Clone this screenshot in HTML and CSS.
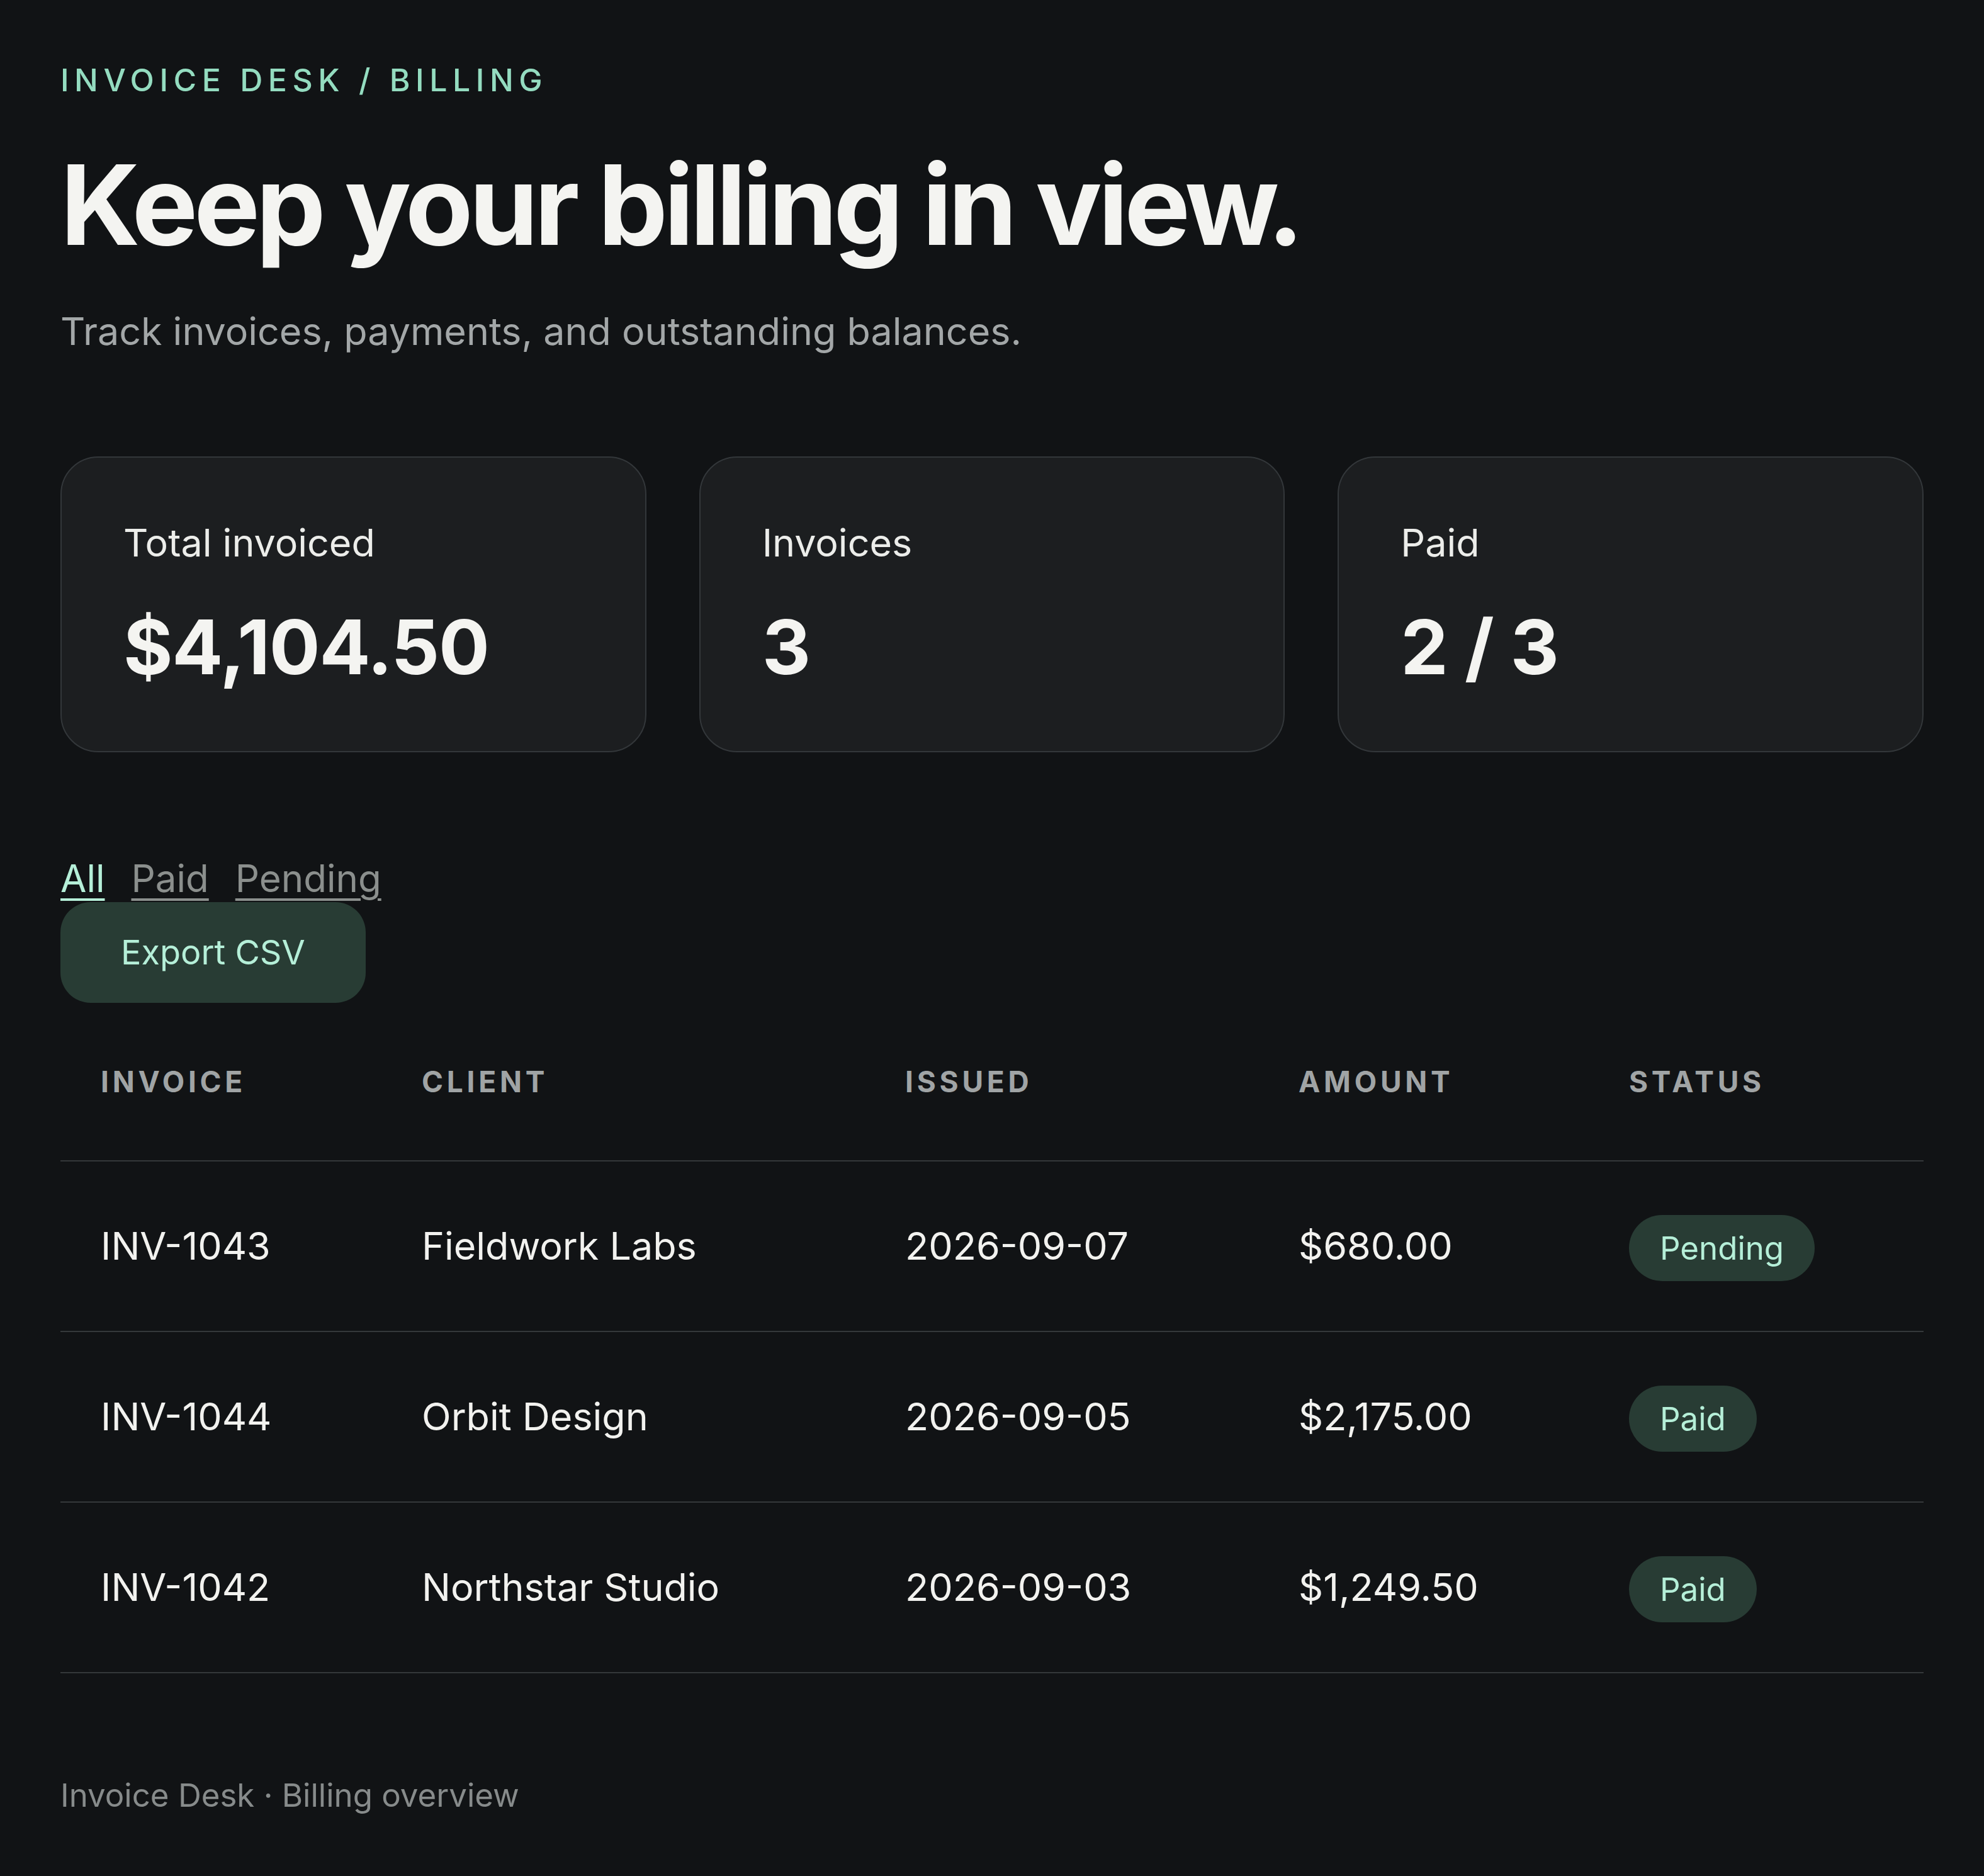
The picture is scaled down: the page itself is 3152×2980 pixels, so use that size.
FILE: index.html
```html
<!DOCTYPE html>
<html lang="en">
<head>
<meta charset="utf-8">
<title>Invoice Desk / Billing</title>
<link rel="stylesheet" href="styles.css">
</head>
<body>
<main class="page">
  <div class="crumb">Invoice Desk / Billing</div>
  <h1 class="title">Keep your billing in view.</h1>
  <p class="subtitle">Track invoices, payments, and outstanding balances.</p>

  <section class="cards">
    <div class="card">
      <div class="card-label">Total invoiced</div>
      <div class="card-value">$4,104.50</div>
    </div>
    <div class="card">
      <div class="card-label">Invoices</div>
      <div class="card-value">3</div>
    </div>
    <div class="card">
      <div class="card-label">Paid</div>
      <div class="card-value">2 / 3</div>
    </div>
  </section>

  <nav class="filters">
    <a class="filter active" href="#">All</a>
    <a class="filter" href="#">Paid</a>
    <a class="filter" href="#">Pending</a>
  </nav>
  <button class="export" type="button">Export CSV</button>

  <div class="table">
    <div class="row head">
      <div class="cell">Invoice</div>
      <div class="cell">Client</div>
      <div class="cell">Issued</div>
      <div class="cell">Amount</div>
      <div class="cell">Status</div>
    </div>
    <div class="row">
      <div class="cell">INV-1043</div>
      <div class="cell">Fieldwork Labs</div>
      <div class="cell">2026-09-07</div>
      <div class="cell">$680.00</div>
      <div class="cell"><span class="pill">Pending</span></div>
    </div>
    <div class="row">
      <div class="cell">INV-1044</div>
      <div class="cell">Orbit Design</div>
      <div class="cell">2026-09-05</div>
      <div class="cell">$2,175.00</div>
      <div class="cell"><span class="pill">Paid</span></div>
    </div>
    <div class="row">
      <div class="cell">INV-1042</div>
      <div class="cell">Northstar Studio</div>
      <div class="cell">2026-09-03</div>
      <div class="cell">$1,249.50</div>
      <div class="cell"><span class="pill">Paid</span></div>
    </div>
  </div>

  <footer class="footer">Invoice Desk · Billing overview</footer>
</main>
</body>
</html>
```

FILE: styles.css
```css
* {
  box-sizing: border-box;
  margin: 0;
  padding: 0;
}

html,
body {
  background: #111315;
}

body {
  font-family: Inter, "Noto Sans", "Liberation Sans", sans-serif;
  color: #f2f2ef;
}

.page {
  padding: 90px 96px 89px;
}

.crumb {
  font-size: 50px;
  line-height: 75px;
  font-weight: 500;
  letter-spacing: 0.17em;
  text-transform: uppercase;
  color: #94dcc0;
}

.title {
  margin-top: 63px;
  font-size: 176px;
  line-height: 194px;
  font-weight: 700;
  letter-spacing: -0.035em;
  color: #f4f4f1;
}

.subtitle {
  margin-top: 59px;
  font-size: 61px;
  line-height: 90px;
  color: #a3a7a8;
}

.cards {
  margin-top: 154px;
  display: grid;
  grid-template-columns: repeat(3, 1fr);
  gap: 84px;
}

.card {
  height: 470px;
  padding: 90px 98px 0;
  background: #1c1e20;
  border: 2px solid #33373a;
  border-radius: 60px;
}

.card-label {
  font-size: 61px;
  line-height: 90px;
  color: #ecedea;
}

.card-value {
  margin-top: 50px;
  font-size: 120px;
  line-height: 142px;
  font-weight: 700;
  letter-spacing: -0.01em;
  color: #f4f4f1;
}

.filters {
  margin-top: 163px;
  display: flex;
  gap: 42px;
  font-size: 60px;
  line-height: 75px;
}

.filter {
  color: #8b8f8d;
  text-decoration: underline;
  text-decoration-thickness: 4px;
  text-underline-offset: 10px;
}

.filter.active {
  color: #b5efd8;
}

.export {
  display: block;
  height: 160px;
  padding: 0 96px;
  border: none;
  border-radius: 48px;
  background: #283c34;
  color: #b5efd8;
  font-family: inherit;
  font-size: 54px;
  line-height: 84px;
}

.row {
  display: grid;
  grid-template-columns: 510px 768px 625px 525px 1fr;
  align-items: center;
  height: 271px;
  border-bottom: 2px solid #34383a;
  font-size: 61px;
  color: #f2f2ef;
}

.row.head {
  height: 252px;
  font-size: 46px;
  font-weight: 700;
  letter-spacing: 0.125em;
  text-transform: uppercase;
  color: #a0a4a5;
}

.cell {
  padding: 0 64px;
  line-height: 1.5;
}

.pill {
  display: inline-block;
  margin-top: 6px;
  padding: 15px 49px;
  border-radius: 999px;
  background: #283c34;
  color: #b5efd8;
  font-size: 51px;
  line-height: 75px;
}

.footer {
  margin-top: 156px;
  font-size: 51px;
  line-height: 75px;
  color: #878b8b;
}
```
